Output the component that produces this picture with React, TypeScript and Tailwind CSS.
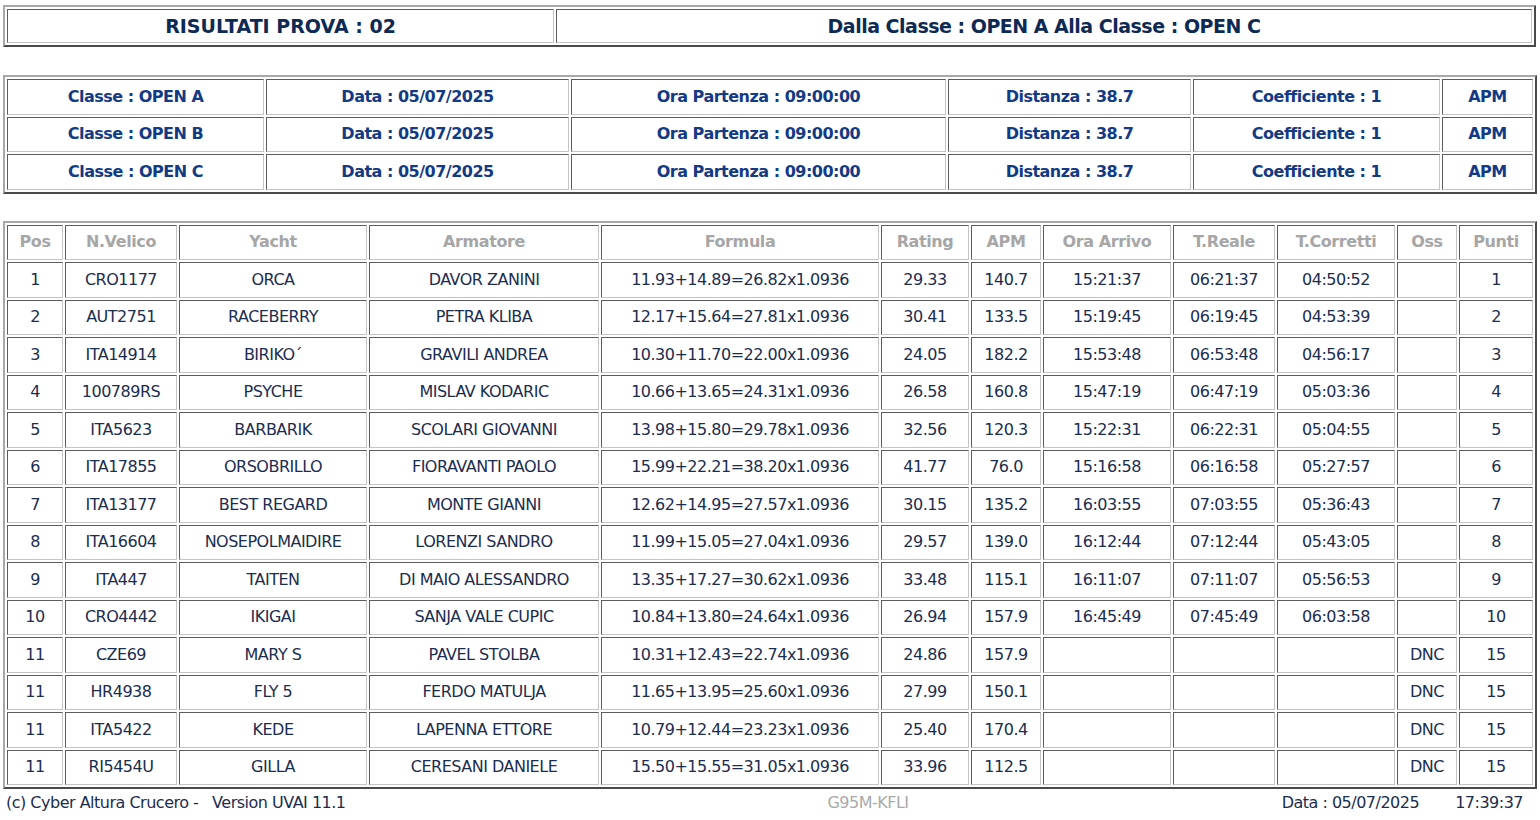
import React from 'react'

const font = "font-['DejaVu_Sans',Tahoma,sans-serif]"

const classi = ['OPEN A', 'OPEN B', 'OPEN C']

type Row = [string, string, string, string, string, string, string, string, string, string, string, string]

const rows: Row[] = [
  ['1', 'CRO1177', 'ORCA', 'DAVOR ZANINI', '11.93+14.89=26.82x1.0936', '29.33', '140.7', '15:21:37', '06:21:37', '04:50:52', '', '1'],
  ['2', 'AUT2751', 'RACEBERRY', 'PETRA KLIBA', '12.17+15.64=27.81x1.0936', '30.41', '133.5', '15:19:45', '06:19:45', '04:53:39', '', '2'],
  ['3', 'ITA14914', 'BIRIKO´', 'GRAVILI ANDREA', '10.30+11.70=22.00x1.0936', '24.05', '182.2', '15:53:48', '06:53:48', '04:56:17', '', '3'],
  ['4', '100789RS', 'PSYCHE', 'MISLAV KODARIC', '10.66+13.65=24.31x1.0936', '26.58', '160.8', '15:47:19', '06:47:19', '05:03:36', '', '4'],
  ['5', 'ITA5623', 'BARBARIK', 'SCOLARI GIOVANNI', '13.98+15.80=29.78x1.0936', '32.56', '120.3', '15:22:31', '06:22:31', '05:04:55', '', '5'],
  ['6', 'ITA17855', 'ORSOBRILLO', 'FIORAVANTI PAOLO', '15.99+22.21=38.20x1.0936', '41.77', '76.0', '15:16:58', '06:16:58', '05:27:57', '', '6'],
  ['7', 'ITA13177', 'BEST REGARD', 'MONTE GIANNI', '12.62+14.95=27.57x1.0936', '30.15', '135.2', '16:03:55', '07:03:55', '05:36:43', '', '7'],
  ['8', 'ITA16604', 'NOSEPOLMAIDIRE', 'LORENZI SANDRO', '11.99+15.05=27.04x1.0936', '29.57', '139.0', '16:12:44', '07:12:44', '05:43:05', '', '8'],
  ['9', 'ITA447', 'TAITEN', 'DI MAIO ALESSANDRO', '13.35+17.27=30.62x1.0936', '33.48', '115.1', '16:11:07', '07:11:07', '05:56:53', '', '9'],
  ['10', 'CRO4442', 'IKIGAI', 'SANJA VALE CUPIC', '10.84+13.80=24.64x1.0936', '26.94', '157.9', '16:45:49', '07:45:49', '06:03:58', '', '10'],
  ['11', 'CZE69', 'MARY S', 'PAVEL STOLBA', '10.31+12.43=22.74x1.0936', '24.86', '157.9', '', '', '', 'DNC', '15'],
  ['11', 'HR4938', 'FLY 5', 'FERDO MATULJA', '11.65+13.95=25.60x1.0936', '27.99', '150.1', '', '', '', 'DNC', '15'],
  ['11', 'ITA5422', 'KEDE', 'LAPENNA ETTORE', '10.79+12.44=23.23x1.0936', '25.40', '170.4', '', '', '', 'DNC', '15'],
  ['11', 'RI5454U', 'GILLA', 'CERESANI DANIELE', '15.50+15.55=31.05x1.0936', '33.96', '112.5', '', '', '', 'DNC', '15'],
]

const heads = ['Pos', 'N.Velico', 'Yacht', 'Armatore', 'Formula', 'Rating', 'APM', 'Ora Arrivo', 'T.Reale', 'T.Corretti', 'Oss', 'Punti']
const widths = [56, 112, 188, 230, 278, 88, 70, 128, 102, 118, 60, 74]

const tableCls =
  'w-[1533px] table-fixed border-separate border-spacing-[2px] border-2 border-t-[#a8a8a8] border-l-[#a8a8a8] border-r-[#4a4a4a] border-b-[#4a4a4a]'
const cellCls =
  'border border-t-[#5c5c5c] border-l-[#5c5c5c] border-r-[#c4c4c4] border-b-[#c4c4c4] text-center p-0'

export default function App() {
  return (
    <div className={`${font} bg-white w-[1540px] h-[820px] px-[3px] pt-[5px]`}>
      <table className={tableCls}>
        <colgroup>
          <col style={{ width: 547 }} />
          <col style={{ width: 976 }} />
        </colgroup>
        <tbody>
          <tr className="h-[34px]">
            <td className={`${cellCls} text-[19px] font-bold text-[#0d2a55]`}>RISULTATI PROVA : 02</td>
            <td className={`${cellCls} text-[19px] font-bold text-[#0d2a55] tracking-[-0.5px]`}>
              Dalla Classe : OPEN A Alla Classe : OPEN C
            </td>
          </tr>
        </tbody>
      </table>

      <div className="h-[28px]" />

      <table className={tableCls}>
        <colgroup>
          {[257, 303, 375, 243, 247, 91].map((w, i) => (
            <col key={i} style={{ width: w }} />
          ))}
        </colgroup>
        <tbody>
          {classi.map((c) => (
            <tr key={c} className="h-[35.5px] text-[16px] font-bold text-[#133a85] tracking-[-0.5px]">
              <td className={cellCls}>Classe : {c}</td>
              <td className={cellCls}>Data : 05/07/2025</td>
              <td className={cellCls}>Ora Partenza : 09:00:00</td>
              <td className={cellCls}>Distanza : 38.7</td>
              <td className={cellCls}>Coefficiente : 1</td>
              <td className={cellCls}>APM</td>
            </tr>
          ))}
        </tbody>
      </table>

      <div className="h-[27px]" />

      <table className={tableCls}>
        <colgroup>
          {widths.map((w, i) => (
            <col key={i} style={{ width: w }} />
          ))}
        </colgroup>
        <thead>
          <tr className="h-[35.5px]">
            {heads.map((h) => (
              <th key={h} className={`${cellCls} text-[16px] font-bold text-[#a6a6a6] tracking-[-0.4px]`}>
                {h}
              </th>
            ))}
          </tr>
        </thead>
        <tbody>
          {rows.map((r, i) => (
            <tr key={i} className="h-[35.5px]">
              {r.map((v, j) => (
                <td key={j} className={`${cellCls} text-[16px] text-[#1b2d4f] whitespace-nowrap tracking-[-0.5px]`}>
                  {v}
                </td>
              ))}
            </tr>
          ))}
        </tbody>
      </table>

      <div className="flex items-center h-[28px] text-[16px] text-[#1b2d4f] px-[3px] tracking-[-0.5px]">
        <div className="w-[640px] whitespace-pre">(c) Cyber Altura Crucero -   Version UVAI 11.1</div>
        <div className="w-[444px] text-center text-[#aaaaaa]">G95M-KFLI</div>
        <div className="flex-1 flex justify-end gap-[36px] pr-[11px]">
          <span>Data : 05/07/2025</span>
          <span>17:39:37</span>
        </div>
      </div>
    </div>
  )
}
